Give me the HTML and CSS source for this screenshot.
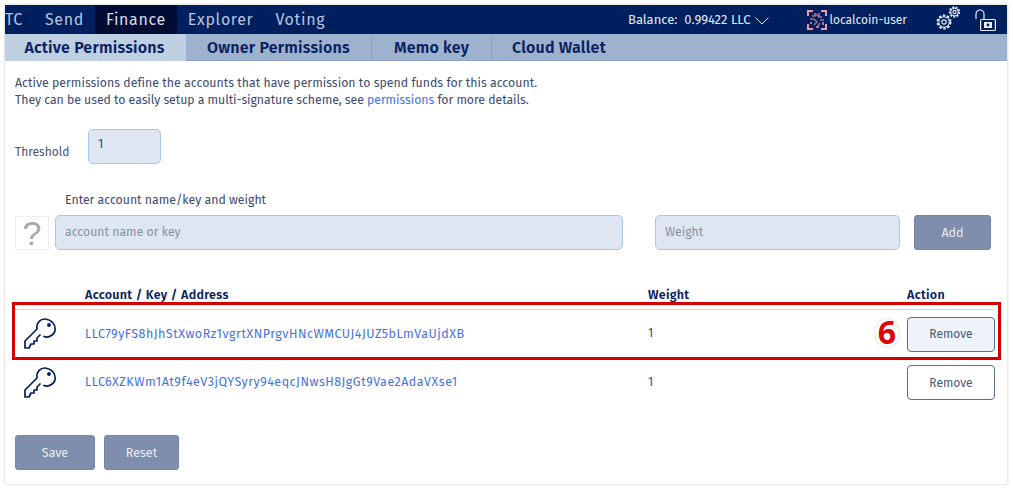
FILE: index.html
```html
<!DOCTYPE html>
<html lang="en">
<head>
<meta charset="utf-8">
<title>Active Permissions</title>
<link rel="stylesheet" href="styles.css">
</head>
<body>
<div class="frame">
  <header class="topbar">
    <nav class="mainnav">
      <a class="navitem navcut">TC</a>
      <a class="navitem">Send</a>
      <a class="navitem navactive">Finance</a>
      <a class="navitem">Explorer</a>
      <a class="navitem">Voting</a>
    </nav>
    <div class="status">
      <span class="balance">Balance:&nbsp; 0.99422 LLC</span>
      <svg class="chevron" width="14" height="8" viewBox="0 0 14 8"><path d="M.5.5L7 7l6.500-6.500" fill="none" stroke="#dfe6f2" stroke-width="1"/></svg>
      <svg class="avatar" width="20" height="20" viewBox="0 0 20 20" fill="none" stroke-width="2"><path d="M1 6V1h5M14 1h5v5M1 14v5h5M19 14v5h-5" stroke="#e59aa8"/><path d="M8 3v3H5M12 3v4h3M3 9h4M13 10h4M7 9l3 3-3 3M13 13l-2 3M9 4l3 3" stroke="#a8738f" stroke-width="1.500"/><path d="M9 17h3M4 12v2M16 12v3" stroke="#e59aa8" stroke-width="1.500"/></svg>
      <span class="username">localcoin-user</span>
      <svg class="gears" width="24" height="26" viewBox="0 0 24 26" fill="none" stroke="#e8edf6"><circle cx="8" cy="17" r="6.500" stroke-dasharray="2.500 1.600" stroke-width="2"/><circle cx="8" cy="17" r="5.200" stroke-width="1"/><circle cx="8" cy="17" r="2.200" stroke-width="1.200"/><circle cx="18.500" cy="7" r="4.800" stroke-dasharray="2 1.300" stroke-width="1.800"/><circle cx="18.500" cy="7" r="3.800" stroke-width="1"/><circle cx="18.500" cy="7" r="1.600" stroke-width="1.100"/></svg>
      <svg class="lock" width="21" height="24" viewBox="0 0 21 24" fill="none" stroke="#e8edf6" stroke-width="1.200"><rect x="5.600" y="10.500" width="14.800" height="11" rx="1"/><path d="M1 10V5a4 4 0 0 1 8 0v5"/><rect x="9" y="13" width="8" height="6" fill="#e8edf6" stroke="none"/><circle cx="13" cy="16" r="1.400" fill="#001f5f" stroke="none"/></svg>
    </div>
  </header>
  <div class="tabs">
    <a class="tab tabactive">Active Permissions</a>
    <a class="tab tab2">Owner Permissions</a>
    <a class="tab tab3">Memo key</a>
    <a class="tab tab4">Cloud Wallet</a>
  </div>
  <main class="content">
    <p class="intro"><span class="line1">Active permissions define the accounts that have permission to spend funds for this account.</span><br><span class="line2">They can be used to easily setup a multi-signature scheme, see <a class="link">permissions</a> for more details.</span></p>
    <div class="threshold">
      <label class="thlabel">Threshold</label>
      <div class="field thfield">1</div>
    </div>
    <div class="enterlabel">Enter account name/key and weight</div>
    <div class="addrow">
      <div class="question">?</div>
      <div class="field ph keyfield">account name or key</div>
      <div class="field ph weightfield">Weight</div>
      <button class="btn addbtn">Add</button>
    </div>
    <div class="grid head">
      <span></span><span>Account / Key / Address</span><span>Weight</span><span class="acthead">Action</span>
    </div>
    <div class="grid row rowfirst">
      <svg class="key" width="32" height="32" viewBox="0 0 32 32" fill="none" stroke="#001f5f" stroke-width="1.700" stroke-linejoin="round" stroke-linecap="round"><path d="M20 18.500C23 20 30 18 31 12.500 32 6 27 1.500 21 1 16.500.8 12 5 13 11L1 23v7h4l2-4h3v-3h3v-3l3-3"/><circle cx="25" cy="7" r="1.100" fill="#001f5f"/></svg>
      <a class="link keytext">LLC79yFS8hJhStXwoRz1vgrtXNPrgvHNcWMCUJ4JUZ5bLmVaUjdXB</a>
      <span class="weight">1</span>
      <button class="remove hovered">Remove</button>
    </div>
    <div class="grid row">
      <svg class="key" width="32" height="32" viewBox="0 0 32 32" fill="none" stroke="#001f5f" stroke-width="1.700" stroke-linejoin="round" stroke-linecap="round"><path d="M20 18.500C23 20 30 18 31 12.500 32 6 27 1.500 21 1 16.500.8 12 5 13 11L1 23v7h4l2-4h3v-3h3v-3l3-3"/><circle cx="25" cy="7" r="1.100" fill="#001f5f"/></svg>
      <a class="link keytext">LLC6XZKWm1At9f4eV3jQYSyry94eqcJNwsH8JgGt9Vae2AdaVXse1</a>
      <span class="weight">1</span>
      <button class="remove">Remove</button>
    </div>
    <div class="actions">
      <button class="btn savebtn">Save</button>
      <button class="btn resetbtn">Reset</button>
    </div>
    <div class="highlight"></div>
    <div class="marker">6</div>
  </main>
</div>
</body>
</html>
```
FILE: styles.css
```css
* { box-sizing: border-box; }
html, body { margin: 0; background: #fff; }
body { padding: 5px 6px 5px 5px; font-family: "Fira Sans", "Noto Sans", "Open Sans", sans-serif; color: #3c4a70; }
.frame { width: 1002px; height: 479px; background: #fff; box-shadow: 0 0 3px #c8c8c8; display: flex; flex-direction: column; }
.topbar { height: 29px; background: #001f5f; display: flex; justify-content: space-between; align-items: center; flex: none; }
.mainnav { display: flex; height: 100%; }
.navitem { display: flex; align-items: center; padding: 0 11px 1px; font-size: 16px; letter-spacing: .65px; color: #b9c4de; }
.navcut { padding-left: 0; }
.navactive { background: #000c33; color: #d5dcea; }
.status { display: flex; align-items: center; color: #e4e9f3; font-size: 13px; height: 100%; padding-right: 11px; }
.chevron { margin: 2px 0 0 4px; }
.avatar { margin-left: 38px; }
.username { margin-left: 3px; font-size: 12px; }
.gears { margin: -3px 0 0 29px; }
.lock { margin-left: 15px; margin-top: 3px; }
.tabs { height: 27px; background: #9db2cf; border-bottom: 1px solid #8ba2c2; display: flex; flex: none; }
.tab { display: flex; align-items: center; justify-content: center; font-size: 16px; letter-spacing: .2px; font-weight: 600; color: #0b2260; border-right: 1px solid #8ba2c2; }
.tabactive { width: 181px; background: #c0d0e3; border-right: 0; margin-bottom: -1px; padding-right: 2px; }
.tab2 { width: 186px; }
.tab3 { width: 120px; }
.tab4 { border-right: 0; padding-left: 20px; }
.content { position: relative; flex: 1; padding: 13px 12px 0 10px; }
.intro { margin: 0; font-size: 12.300px; line-height: 17px; color: #3c4a70; white-space: nowrap; }
.line1 { letter-spacing: .03px; }
.line2 { letter-spacing: -.05px; }
.link { color: #4472e0; }
.threshold { display: flex; align-items: center; margin-top: 21px; }
.thlabel { width: 73px; font-size: 12px; padding-top: 10px; color: #4a5470; }
.field { background: #dde6f1; border: 1px solid #a9c6ee; border-radius: 5px; font-size: 12.300px; display: flex; align-items: center; }
.thfield { width: 73px; height: 35px; padding: 0 0 6px 9px; color: #3c4a70; }
.enterlabel { margin: 27px 0 0 50px; height: 17px; font-size: 12.300px; line-height: 17px; color: #3c4a70; }
.addrow { display: flex; align-items: center; margin-top: 7px; height: 35px; }
.question { width: 34px; height: 34px; border: 1px solid #eee; font-size: 34px; line-height: 32px; text-align: center; color: #a8a8a8; font-family: "Liberation Sans", sans-serif; }
.ph { height: 35px; padding: 0 0 2px 9px; color: #8a92a2; }
.keyfield { width: 568px; margin-left: 6px; }
.weightfield { width: 245px; margin-left: 32px; }
.btn { border: 1px solid #7686a8; border-radius: 3px; background: #7f8eac; color: #e8ecf4; font: 12.500px "Fira Sans", "Noto Sans", sans-serif; padding: 0; }
.addbtn { width: 77px; height: 35px; margin-left: 14px; }
.grid { display: grid; grid-template-columns: 70px 563px 1fr 88px; align-items: center; width: 980px; }
.head { margin-top: 34px; height: 25px; font-size: 12.500px; font-weight: 600; color: #0b2260; letter-spacing: .3px; padding-bottom: 4px; }
.row { height: 49px; }
.rowfirst { border-top: 1px solid #c5d8f2; }
.row:last-of-type { border-bottom: 1px solid #a9c6ee; height: 51px; }
.key { margin-left: 9px; }
.keytext { font-size: 12.500px; letter-spacing: .5px; margin-bottom: 2px; }
.weight { font-size: 12px; color: #3c4a70; margin-bottom: 2px; }
.row:last-of-type .keytext, .row:last-of-type .weight { margin-bottom: 0; }
.remove { width: 88px; height: 35px; border: 1px solid #5e6b90; border-radius: 4px; background: #fff; color: #4b587a; font: 12px "Fira Sans", "Noto Sans", sans-serif; padding: 0; }
.row:last-of-type .remove { margin-top: 1px; }
.hovered { background: #eef2f9; }
.actions { display: flex; gap: 9px; margin-top: 28px; }
.savebtn { width: 80px; height: 35px; }
.resetbtn { width: 75px; height: 35px; }
.highlight { position: absolute; left: 7px; top: 241px; width: 989px; height: 58px; border: 3px solid #d40000; pointer-events: none; }
.marker { position: absolute; left: 870px; top: 258px; width: 24px; height: 28px; border-radius: 50%; background: #fff; box-shadow: 0 0 2px #bbb; color: #e0000a; font: 700 32px/25px "Open Sans", sans-serif; text-align: center; }
```
